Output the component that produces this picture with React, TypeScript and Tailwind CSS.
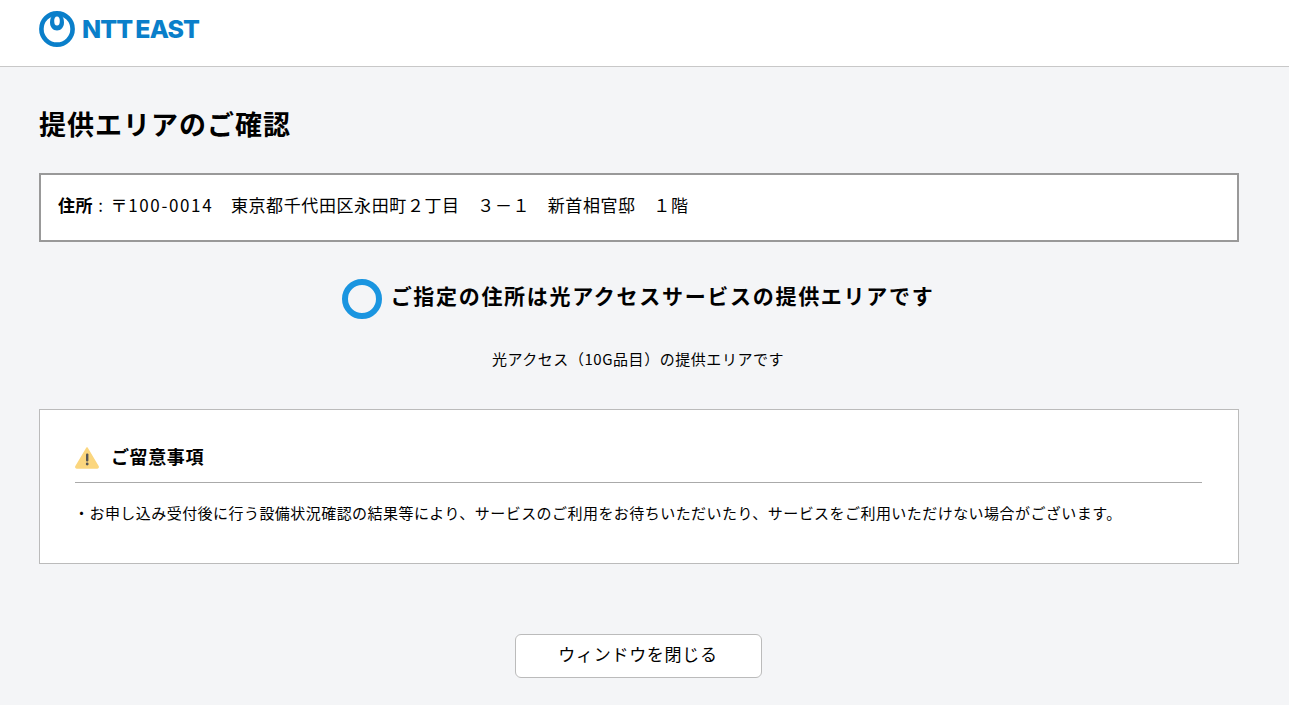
export default function App() {
  return (
    <div className="min-h-[705px] bg-[#f4f5f7] text-black font-['Noto_Sans_CJK_JP','Liberation_Sans',sans-serif]">
      <header className="h-[67px] bg-white border-b border-[#c8c8c8] pl-[39px] pt-[11px]">
        <div className="flex items-center h-[36px]">
          <svg width="36" height="36" viewBox="0 0 36 36" fill="none">
            <circle cx="18" cy="18" r="15.6" stroke="#0a7fca" strokeWidth="4.6" />
            <path d="M18 2.500c-4.500 0-7 4.200-7 9 0 4.700 3 8 7 8s7-3.300 7-8c0-4.800-2.500-9-7-9z" fill="#0a7fca" />
            <ellipse cx="18" cy="10" rx="2.800" ry="4.600" fill="#fff" />
          </svg>
          <span className="ml-[7px] font-['Inter',sans-serif] font-extrabold text-[25px] leading-none tracking-[-0.9px] text-[#0a7fca] whitespace-nowrap">
            NTT<span className="ml-[3px]">EAST</span>
          </span>
        </div>
      </header>
      <main className="pl-[39px] pr-[50px]">
        <h1 className="pt-[39px] h-[106px] text-[27px] leading-[36px] font-bold tracking-[1px]">提供エリアのご確認</h1>
        <section className="h-[69px] bg-white border-2 border-[#999] flex items-center pl-[17px] pb-[6px] text-[17px] tracking-[0.6px] whitespace-pre">
          <b>住所</b><span className="ml-[5px]">:<span className="ml-[7px]">〒</span><span className="tracking-[1.65px]">100-0014</span>　東京都千代田区永田町２丁目　３－１　新首相官邸　１階</span>
        </section>
        <div className="mt-[37px] h-[40px] flex items-center justify-center gap-[9px] pr-[2px]">
          <span className="w-[40px] h-[40px] rounded-full border-[6px] border-[#1a95e0]" />
          <span className="text-[21px] leading-[36px] font-bold tracking-[1.7px] -mt-[9px]">ご指定の住所は光アクセスサービスの提供エリアです</span>
        </div>
        <p className="mt-[30px] mb-[40px] text-center text-[15px] leading-[20px] tracking-[0.55px] pr-[2px]">光アクセス（10G品目）の提供エリアです</p>
        <section className="h-[155px] bg-white border border-[#bbb] pl-[35px] pr-[36px] pt-[28px]">
          <div className="flex items-center h-[45px] border-b border-[#aaa] pb-[2px]">
            <svg width="24" height="22" viewBox="0 0 24 22" className="-mt-[3px]">
              <path d="M12 1 23 19.500a1 1 0 0 1-1 1.500H2a1 1 0 0 1-1-1.500z" fill="#fbd67e" stroke="#fbd67e" strokeLinejoin="round" strokeWidth="1.500" />
              <rect x="11" y="6.500" width="2.400" height="8" rx="1" fill="#555" />
              <circle cx="12.200" cy="17" r="1.400" fill="#555" />
            </svg>
            <h2 className="ml-[12px] text-[18px] font-bold tracking-[0.6px] -mt-[6px]">ご留意事項</h2>
          </div>
          <p className="mt-[20px] text-[15px] leading-[20px] tracking-[0.45px] whitespace-nowrap -ml-[1px]">・お申し込み受付後に行う設備状況確認の結果等により、サービスのご利用をお待ちいただいたり、サービスをご利用いただけない場合がございます。</p>
        </section>
        <div className="mt-[70px] flex justify-center pr-[2px]">
          <button className="w-[247px] h-[44px] bg-white border border-[#bbb] rounded-[6px] pb-[4px] text-[17px] tracking-[0.7px]">ウィンドウを閉じる</button>
        </div>
      </main>
    </div>
  );
}
